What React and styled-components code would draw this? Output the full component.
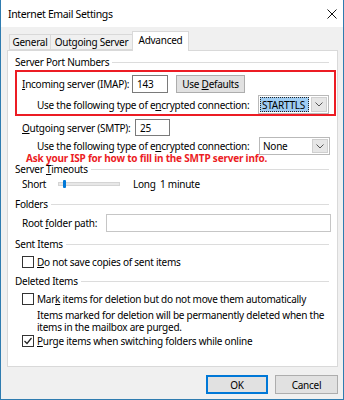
import React from 'react';
import styled, { createGlobalStyle } from 'styled-components';

const Global = createGlobalStyle`
  html, body { margin: 0; padding: 0; background: #ffffff; }
  body {
    font-family: "Noto Sans", "Open Sans", sans-serif;
    font-size: 10px;
    letter-spacing: -0.25px;
    color: #000;
  }
`;

const Window = styled.div`
  width: 344px;
  height: 400px;
  box-sizing: border-box;
  border: 1px solid #2f7cb0;
  border-top: none;
  background: #f0f0f0;
  display: flex;
  flex-direction: column;
`;

const TitleBar = styled.div`
  height: 27px;
  flex: none;
  background: #fff;
  display: flex;
  align-items: center;
  justify-content: space-between;
  padding: 0 6px 0 7px;
  font-size: 10.5px;
  letter-spacing: -0.35px;
`;

const TabStrip = styled.div`
  display: flex;
  align-items: flex-end;
  height: 19px;
  margin-top: 4px;
  padding-left: 9px;
`;

const Tab = styled.div`
  box-sizing: border-box;
  width: ${p => p.$w}px;
  height: ${p => (p.$active ? 20 : 16)}px;
  margin-left: -1px;
  margin-bottom: ${p => (p.$active ? -1 : 0)}px;
  border: 1px solid #d9d9d9;
  border-bottom: ${p => (p.$active ? 'none' : '1px solid #d9d9d9')};
  background: ${p => (p.$active ? '#fff' : '#f0f0f0')};
  position: relative;
  z-index: ${p => (p.$active ? 2 : 1)};
  display: flex;
  align-items: center;
  justify-content: center;
  padding-bottom: ${p => (p.$active ? 3 : 0)}px;
  white-space: nowrap;
`;

const Panel = styled.div`
  box-sizing: border-box;
  height: 317px;
  margin: 0 5px 0 6px;
  border: 1px solid #d9d9d9;
  background: #fff;
  display: flex;
  flex-direction: column;
  position: relative;
  z-index: 1;
`;

const GroupHeader = styled.div`
  display: flex;
  align-items: center;
  height: ${p => p.$h || 14}px;
  margin: ${p => p.$mt}px 8px 0 7px;
  gap: 3px;
  white-space: nowrap;
  &::after {
    content: '';
    flex: 1;
    height: 1px;
    background: #dcdcdc;
  }
`;

const RedBox = styled.div`
  box-sizing: border-box;
  height: 46px;
  margin: 1px 1px 0 7px;
  border: 2px solid #ec1c24;
  padding: 3px 0 0 5px;
  display: flex;
  flex-direction: column;
`;

const Row = styled.div`
  display: flex;
  align-items: center;
  flex: none;
  height: ${p => p.$h}px;
  margin-top: ${p => p.$mt || 0}px;
  padding-left: ${p => p.$pl}px;
  white-space: nowrap;
`;

const Label = styled.span`
  width: ${p => (p.$w ? `${p.$w}px` : 'auto')};
  flex: none;
`;

const Key = styled.span`
  text-decoration: underline;
  text-underline-offset: 1px;
`;

const TextBox = styled.div`
  box-sizing: border-box;
  width: ${p => (p.$w ? `${p.$w}px` : 'auto')};
  flex: ${p => (p.$w ? 'none' : '1')};
  height: ${p => p.$h}px;
  border: 1px solid ${p => (p.$light ? '#c6c6c6' : '#7a7a7a')};
  background: #fff;
  display: flex;
  align-items: center;
  padding-left: 4px;
  margin-right: ${p => p.$mr || 0}px;
`;

const Button = styled.div`
  box-sizing: border-box;
  width: ${p => p.$w}px;
  height: ${p => p.$h}px;
  margin-left: ${p => p.$ml || 0}px;
  background: #e1e1e1;
  border: 1px solid ${p => (p.$default ? '#0078d7' : '#adadad')};
  box-shadow: ${p => (p.$default ? 'inset 0 0 0 1px #0078d7' : 'none')};
  display: flex;
  align-items: center;
  justify-content: center;
`;

const Combo = styled.div`
  box-sizing: border-box;
  width: 71px;
  height: ${p => p.$h}px;
  margin-left: auto;
  margin-right: ${p => p.$mr}px;
  border: 1px solid #b9b9b9;
  background: #fff;
  display: flex;
  align-items: stretch;
`;

const ComboValue = styled.div`
  flex: 1;
  display: flex;
  align-items: center;
  padding-left: ${p => (p.$selected ? 2 : 3)}px;
  margin: ${p => (p.$selected ? '1px' : '0')};
  background: ${p => (p.$selected ? '#9fcdf3' : 'transparent')};
  outline: ${p => (p.$selected ? '1px dotted #222' : 'none')};
  outline-offset: -1px;
`;

const ComboArrow = styled.div`
  width: 14px;
  margin: 1px;
  background: #e6e6e6;
  border: 1px solid #cfcfcf;
  display: flex;
  align-items: center;
  justify-content: center;
`;

const RedNote = styled.div`
  height: 10px;
  line-height: 10px;
  margin-top: -2px;
  padding-left: 18px;
  font-weight: bold;
  letter-spacing: -0.2px;
  color: #ec1c24;
  white-space: nowrap;
  position: relative;
  z-index: 1;
`;

const Slider = styled.div`
  position: relative;
  width: 62px;
  height: 10px;
  margin-right: 13px;
  display: flex;
  align-items: center;
  &::before {
    content: '';
    flex: 1;
    height: 2px;
    background: #e7e7e7;
    border: 1px solid #d4d4d4;
  }
`;

const Thumb = styled.div`
  position: absolute;
  left: 5px;
  top: 1px;
  width: 3px;
  height: 8px;
  background: #0078d7;
  border-radius: 1px;
`;

const Check = styled.div`
  box-sizing: border-box;
  width: 12px;
  height: 12px;
  border: 1px solid #333;
  background: #fff;
  margin-right: 3px;
  flex: none;
  display: flex;
  align-items: center;
  justify-content: center;
`;

const InfoText = styled.div`
  margin-top: 3px;
  padding-left: 29px;
  line-height: 12px;
  height: 24px;
  white-space: nowrap;
`;

const Footer = styled.div`
  display: flex;
  justify-content: flex-end;
  gap: 7px;
  margin-top: 8px;
  padding-right: 5px;
`;

function Combobox({ value, selected, h, mr }) {
  return (
    <Combo $h={h} $mr={mr}>
      <ComboValue $selected={selected}>{value}</ComboValue>
      <ComboArrow>
        <svg width="8" height="5" viewBox="0 0 8 5">
          <polyline points="0.5,0.5 4,4 7.5,0.5" fill="none" stroke="#555" strokeWidth="1" />
        </svg>
      </ComboArrow>
    </Combo>
  );
}

function Checkbox({ checked, children, mt }) {
  return (
    <Row $h={14} $mt={mt} $pl={14}>
      <Check>
        {checked && (
          <svg width="10" height="10" viewBox="0 0 10 10">
            <polyline points="1.5,5 4,7.5 8.5,2" fill="none" stroke="#222" strokeWidth="1.2" />
          </svg>
        )}
      </Check>
      <span>{children}</span>
    </Row>
  );
}

export default function App() {
  return (
    <>
      <Global />
      <Window>
        <TitleBar>
          <span>Internet Email Settings</span>
          <svg width="10" height="10" viewBox="0 0 10 10">
            <line x1="0.5" y1="0.5" x2="9.5" y2="9.5" stroke="#111" strokeWidth="1" />
            <line x1="9.5" y1="0.5" x2="0.5" y2="9.5" stroke="#111" strokeWidth="1" />
          </svg>
        </TitleBar>

        <TabStrip>
          <Tab $w={42}>General</Tab>
          <Tab $w={83}>Outgoing Server</Tab>
          <Tab $w={57} $active>Advanced</Tab>
        </TabStrip>

        <Panel>
          <GroupHeader $mt={4}>Server Port Numbers</GroupHeader>
          <RedBox>
            <Row $h={18} $pl={0}>
              <Label $w={110}><Key>I</Key>ncoming server (IMAP):</Label>
              <TextBox $w={36} $h={18}>143</TextBox>
              <Button $w={69} $h={18} $ml={8}>Use&nbsp;<Key>D</Key>efaults</Button>
            </Row>
            <Row $h={19} $mt={2} $pl={15}>
              <span>Use the following type of e<Key>n</Key>crypted connection:</span>
              <Combobox value="STARTTLS" selected h={19} mr={5} />
            </Row>
          </RedBox>

          <Row $h={17} $mt={3} $pl={14}>
            <Label $w={113}><Key>O</Key>utgoing server (SMTP):</Label>
            <TextBox $w={35} $h={17}>25</TextBox>
          </Row>
          <Row $h={18} $mt={1} $pl={29}>
            <span>Use the following type of e<Key>n</Key>crypted connection:</span>
            <Combobox value="None" h={18} mr={7} />
          </Row>
          <RedNote>Ask your ISP for how to fill in the SMTP server info.</RedNote>

          <GroupHeader $mt={0} $h={12}>
            <span>Server <Key>T</Key>imeouts</span>
          </GroupHeader>
          <Row $h={18} $mt={0} $pl={14}>
            <Label $w={36}>Short</Label>
            <Slider><Thumb /></Slider>
            <Label $w={27}>Long</Label>
            <span>1 minute</span>
          </Row>

          <GroupHeader $mt={4}>Folders</GroupHeader>
          <Row $h={18} $mt={3} $pl={14}>
            <Label $w={84}>Root <Key>f</Key>older path:</Label>
            <TextBox $h={18} $mr={6} $light />
          </Row>

          <GroupHeader $mt={5}>Sent Items</GroupHeader>
          <Checkbox mt={4}><Key>D</Key>o not save copies of sent items</Checkbox>

          <GroupHeader $mt={5}>Deleted Items</GroupHeader>
          <Checkbox mt={4}>Mar<Key>k</Key> items for deletion but do not move them automatically</Checkbox>
          <InfoText>
            Items marked for deletion will be permanently deleted when the
            <br />
            items in the mailbox are purged.
          </InfoText>
          <Checkbox mt={1} checked><Key>P</Key>urge items when switching folders while online</Checkbox>
        </Panel>

        <Footer>
          <Button $w={62} $h={19} $default>OK</Button>
          <Button $w={63} $h={19}>Cancel</Button>
        </Footer>
      </Window>
    </>
  );
}
